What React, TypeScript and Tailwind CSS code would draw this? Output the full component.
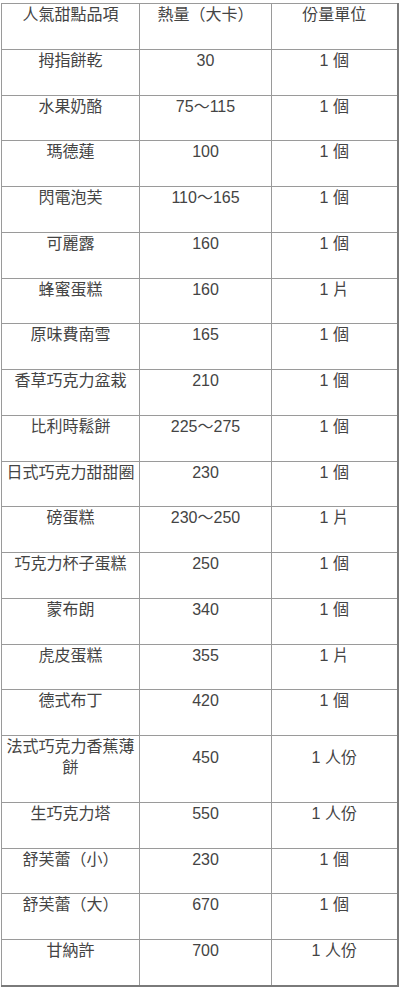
const rows: [string, string, string][] = [
  ["拇指餅乾", "30", "1 個"],
  ["水果奶酪", "75～115", "1 個"],
  ["瑪德蓮", "100", "1 個"],
  ["閃電泡芙", "110～165", "1 個"],
  ["可麗露", "160", "1 個"],
  ["蜂蜜蛋糕", "160", "1 片"],
  ["原味費南雪", "165", "1 個"],
  ["香草巧克力盆栽", "210", "1 個"],
  ["比利時鬆餅", "225～275", "1 個"],
  ["日式巧克力甜甜圈", "230", "1 個"],
  ["磅蛋糕", "230～250", "1 片"],
  ["巧克力杯子蛋糕", "250", "1 個"],
  ["蒙布朗", "340", "1 個"],
  ["虎皮蛋糕", "355", "1 片"],
  ["德式布丁", "420", "1 個"],
  ["法式巧克力香蕉薄餅", "450", "1 人份"],
  ["生巧克力塔", "550", "1 人份"],
  ["舒芙蕾（小）", "230", "1 個"],
  ["舒芙蕾（大）", "670", "1 個"],
  ["甘納許", "700", "1 人份"],
];

const cell =
  "border border-[#9a9a9a] text-center align-middle px-0 pt-0 pb-[23.75px] leading-[21px] break-all";

export default function App() {
  return (
    <div
      className="bg-white w-[400px] pl-[1px] pt-[3px] text-[16px] text-[#444444]"
      style={{ fontFamily: '"Liberation Sans", "Noto Sans CJK TC", sans-serif' }}
    >
      <table className="table-fixed border-collapse w-[396px] border-r-2 border-b-2 border-[#7a7a7a]">
        <colgroup>
          <col className="w-[138px]" />
          <col className="w-[132px]" />
          <col className="w-[126px]" />
        </colgroup>
        <thead>
          <tr>
            <th className={`${cell} font-normal`}>人氣甜點品項</th>
            <th className={`${cell} font-normal`}>熱量（大卡）</th>
            <th className={`${cell} font-normal`}>份量單位</th>
          </tr>
        </thead>
        <tbody>
          {rows.map(([name, kcal, unit]) => (
            <tr key={name}>
              <td className={cell}>{name}</td>
              <td className={cell}>{kcal}</td>
              <td className={cell}>{unit}</td>
            </tr>
          ))}
        </tbody>
      </table>
    </div>
  );
}
